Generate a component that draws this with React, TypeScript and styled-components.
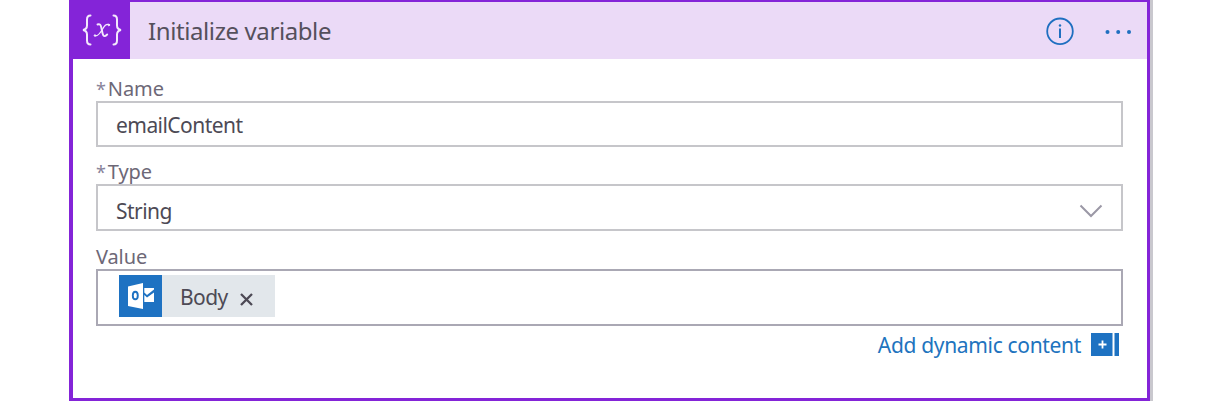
import React from "react";
import styled, { createGlobalStyle } from "styled-components";

const GlobalStyle = createGlobalStyle`
  *, *::before, *::after { box-sizing: border-box; }
  body {
    margin: 0;
    background: #fff;
    font-family: "Noto Sans", "Open Sans", sans-serif;
    color: #4d4a55;
    overflow: hidden;
  }
`;

const Card = styled.section`
  width: 1081px;
  height: 401px;
  margin-left: 69px;
  display: flex;
  flex-direction: column;
  background: #fff;
  border: solid #8424d8;
  border-width: 2px 3px 3px 4px;
  box-shadow: 3px 0 0 #c9c8ce;
`;

const Header = styled.header`
  height: 57px;
  flex: none;
  display: flex;
  align-items: center;
  background: #ebdaf7;
`;

const VariableBadge = styled.div`
  width: 57px;
  height: 57px;
  display: flex;
  align-items: center;
  justify-content: center;
  padding: 0 0 1px 0;
  background: #8424d8;
`;

const Title = styled.h1`
  margin: 0 auto 0 18px;
  font-size: 24px;
  font-weight: 400;
  line-height: 32px;
  letter-spacing: -0.4px;
  color: #55505c;
`;

const IconButton = styled.button<{ $gap: number }>`
  display: flex;
  padding: 0;
  margin: 0 ${(p) => p.$gap}px 0 0;
  border: 0;
  background: none;
`;

const Body = styled.div`
  display: flex;
  flex-direction: column;
  padding: 17px 24px 0 23px;
`;

const Field = styled.div<{ $gap: number }>`
  display: flex;
  flex-direction: column;
  margin-bottom: ${(p) => p.$gap}px;
`;

const Label = styled.label`
  height: 25px;
  line-height: 26px;
  font-size: 20px;
  letter-spacing: -0.1px;
  color: #6d6877;
  white-space: nowrap;
`;

const Required = styled.span`
  margin-right: 2px;
  font-size: 18px;
  color: #88839a;
`;

const Control = styled.div<{ $height: number; $border?: string; $drop?: number }>`
  height: ${(p) => p.$height}px;
  display: flex;
  align-items: center;
  justify-content: space-between;
  padding: ${(p) => p.$drop ?? 0}px 18px 0 18px;
  border: 2px solid ${(p) => p.$border ?? "#c6c6ca"};
  background: #fff;
  font-size: 21px;
  letter-spacing: -0.55px;
  line-height: 30px;
`;

const Token = styled.div`
  display: flex;
  align-items: center;
  width: 156px;
  height: 42px;
  margin: 0 0 3px 3px;
  background: #e2e7eb;
`;

const TokenIcon = styled.div`
  width: 43px;
  height: 42px;
  flex: none;
  display: flex;
  background: #1e72c2;
`;

const TokenName = styled.span`
  margin: 1px 12px 0 18px;
  color: #4d4a55;
`;

const RemoveIcon = styled.svg`
  margin-top: 7px;
`;

const DynamicRow = styled.div`
  display: flex;
  align-items: center;
  justify-content: flex-end;
  height: 37px;
  padding-right: 4px;
  color: #2173be;
  font-size: 21px;
  letter-spacing: -0.33px;
`;

const DynamicLink = styled.span`
  margin-right: 10px;
  line-height: 30px;
`;

export default function App() {
  return (
    <>
      <GlobalStyle />
      <Card>
        <Header>
          <VariableBadge>
            <svg width="42" height="32" viewBox="0 0 42 32" fill="none" stroke="#f3e8fc" strokeLinecap="round">
              <path d="M9.500 1.500C6.500 1.500 6 3 6 5.500v6c0 2.500-1 4-4 4.500 3 .5 4 2 4 4.500v6c0 2.500.5 4 3.500 4" strokeWidth="2" />
              <path d="M32.500 1.500c3 0 3.500 1.500 3.500 4v6c0 2.500 1 4 4 4.500-3 .5-4 2-4 4.500v6c0 2.500-.5 4-3.500 4" strokeWidth="2" />
              <path d="M16.500 10.500c2.400-1 3.200.5 3.800 3l1.300 6c.7 3 2 3.500 4.600 1" strokeWidth="1.900" />
              <path d="M28 10.500c-3-1-4.500 1.400-7 5.500s-4.500 6.500-7 5.700" strokeWidth="1.300" />
              <circle cx="27.800" cy="11" r=".8" fill="#f3e8fc" />
              <circle cx="14" cy="21.500" r=".8" fill="#f3e8fc" />
            </svg>
          </VariableBadge>
          <Title>Initialize variable</Title>
          <IconButton $gap={30} aria-label="Information">
            <svg width="28" height="28" viewBox="0 0 28 28">
              <circle cx="14" cy="14.300" r="12.800" fill="none" stroke="#1f6fc0" strokeWidth="1.800" />
              <path d="M14 11.500v9.500" stroke="#1f6fc0" strokeWidth="2" />
              <circle cx="14" cy="8.500" r="1.200" fill="#1f6fc0" />
            </svg>
          </IconButton>
          <IconButton $gap={15} aria-label="More">
            <svg width="28" height="6" viewBox="0 0 28 6" fill="#1f6fc0">
              <circle cx="3.500" cy="4" r="2" />
              <circle cx="14.200" cy="4" r="2" />
              <circle cx="25" cy="4" r="2" />
            </svg>
          </IconButton>
        </Header>
        <Body>
          <Field $gap={12}>
            <Label><Required>*</Required>Name</Label>
            <Control $height={46} $drop={2}>emailContent</Control>
          </Field>
          <Field $gap={13}>
            <Label><Required>*</Required>Type</Label>
            <Control $height={47} $drop={7}>
              String
              <svg width="24" height="14" viewBox="0 0 24 14" fill="none" stroke="#9b98a6" strokeWidth="2">
                <path d="M1.500 1.500L12 12 22.500 1.500" />
              </svg>
            </Control>
          </Field>
          <Field $gap={0}>
            <Label>Value</Label>
            <Control $height={57} $border="#aaa8b4">
              <Token>
                <TokenIcon>
                  <svg width="43" height="42" viewBox="0 0 43 42">
                    <path d="M9 11.500L24 8v26L9 31z" fill="#fff" />
                    <ellipse cx="16.300" cy="20.500" rx="2.500" ry="3.800" fill="none" stroke="#1e72c2" strokeWidth="1.900" />
                    <path d="M25.300 13H35v1.500l-7 5.500-2.700-2.500z" fill="#fff" />
                    <path d="M25.300 20l2.700 2.500 7-5V27h-9.700z" fill="#fff" />
                  </svg>
                </TokenIcon>
                <TokenName>Body</TokenName>
                <RemoveIcon width="13" height="13" viewBox="0 0 13 13" stroke="#4d4a55" strokeWidth="2.300">
                  <path d="M1 1l11 11M12 1L1 12" />
                </RemoveIcon>
              </Token>
            </Control>
          </Field>
          <DynamicRow>
            <DynamicLink>Add dynamic content</DynamicLink>
            <svg width="28" height="23" viewBox="0 0 28 23">
              <path d="M0 0h21.500v23H0zM23.500 0H28v23h-4.500z" fill="#1e72c2" />
              <path d="M7.500 11.500h8M11.500 7.500v8" stroke="#fff" strokeWidth="1.800" />
            </svg>
          </DynamicRow>
        </Body>
      </Card>
    </>
  );
}
